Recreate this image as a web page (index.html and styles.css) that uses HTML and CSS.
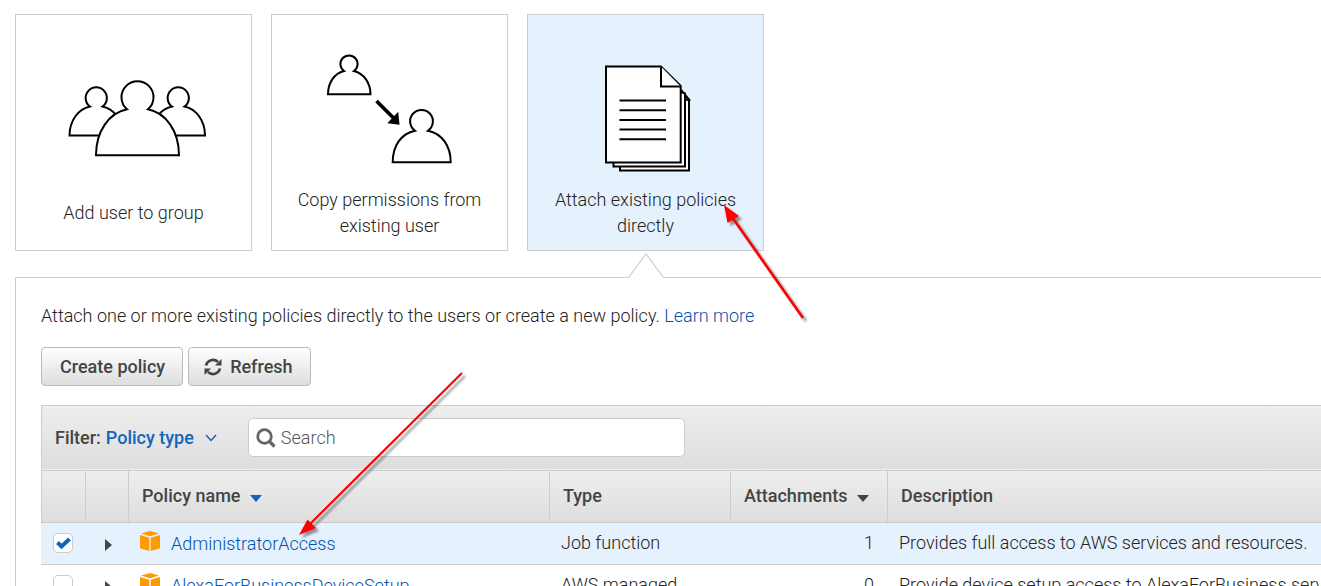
FILE: index.html
```html
<!DOCTYPE html>
<html lang="en">
<head>
<meta charset="utf-8">
<title>Set permissions</title>
<link rel="stylesheet" href="styles.css">
</head>
<body>
<main class="page">
  <div class="options">
    <button type="button" class="option">
      <svg class="option-icon" viewBox="16 15 235 172" aria-hidden="true">
        <g class="outline">
          <path d="M69.5 135.5C69.5 121 78 109 90 106.500A10.600 10.600 0 1 1 102.500 106.500C114.500 109 123 121 123 135.500Z"/>
          <path d="M151.500 135.500C151.500 121 160 109 172 106.500A10.600 10.600 0 1 1 184.500 106.500C196.500 109 205 121 205 135.500Z"/>
          <path d="M96 155.200C96 131 109 113 127 109.300A16 16 0 1 1 148 109.300C166 113 179 131 179 155.200Z"/>
        </g>
      </svg>
      <span class="option-label">Add user to group</span>
    </button>
    <button type="button" class="option">
      <svg class="option-icon" viewBox="272 15 235 172" aria-hidden="true">
        <g class="outline">
          <path d="M328 94.300C328 83 334 73.500 344 71A8.600 8.600 0 1 1 354 71C364 73.500 370.500 83 370.500 94.300Z"/>
          <path d="M392.700 162.300C392.700 146 401 133.500 415 130.700A11.400 11.400 0 1 1 428 130.700C442 133.500 450.700 146 450.700 162.300Z"/>
        </g>
        <path d="M376.500 101L394 118.500" stroke="#000" stroke-width="3.800"/>
        <path d="M399.500 124.700L387.300 123.300L398.200 111.700Z"/>
      </svg>
      <span class="option-label">Copy permissions from existing user</span>
    </button>
    <button type="button" class="option option-selected">
      <svg class="option-icon" viewBox="528 15 235 172" aria-hidden="true">
        <g class="outline">
          <path d="M620 99H683L689 100V170.500H620Z"/>
          <path d="M681 90L689 99.500H685"/>
          <path d="M613.500 92H681L685 93.500V166.500H613.500Z"/>
          <path d="M606 66.500H661L680.700 86V162.500H606Z"/>
          <path d="M661 66.500V86.500H680.700"/>
          <path d="M619.500 100.500H666M619.500 110.300H666M619.500 120H666M619.500 129.600H666M619.500 139.300H666"/>
        </g>
      </svg>
      <span class="option-label">Attach existing policies directly</span>
    </button>
  </div>

  <section class="panel">
    <svg class="panel-caret" viewBox="0 0 38 26" aria-hidden="true">
      <path d="M1 25L19 1L37 25V26H1Z" fill="#fff"/>
      <path d="M0 24.500H1.500L19 1L36.500 24.500H38" fill="none" stroke="#ccc" stroke-width="1.200"/>
    </svg>
    <p class="intro">Attach one or more existing policies directly to the users or create a new policy. <a href="#">Learn more</a></p>
    <div class="actions">
      <button type="button" class="btn">Create policy</button>
      <button type="button" class="btn"><svg class="btn-icon" viewBox="0 0 18 18" aria-hidden="true">
        <path d="M2 7.500A7.200 7.200 0 0 1 14 4M16 10.500A7.200 7.200 0 0 1 4 14" fill="none" stroke="#444" stroke-width="2.600"/>
        <path d="M17.500 1V7.500H11ZM.5 17V10.500H7Z" fill="#444"/>
      </svg>Refresh</button>
    </div>

    <div class="filter">
      <span class="filter-name">Filter:</span>
      <button type="button" class="filter-type">Policy type
        <svg class="chevron" viewBox="0 0 12 8" aria-hidden="true"><path d="M1 1L6 6.500L11 1" fill="none" stroke="#16b" stroke-width="1.500"/></svg>
      </button>
      <label class="search">
        <svg class="search-icon" viewBox="0 0 20 20" aria-hidden="true"><circle cx="8.500" cy="8.500" r="6.800" fill="none" stroke="#666" stroke-width="2.800"/><path d="M13.500 13.500L18.500 18.500" stroke="#666" stroke-width="3.200"/></svg>
        <input class="search-input" type="text" placeholder="Search" aria-label="Search">
      </label>
    </div>

    <table class="policies">
      <colgroup><col class="col-check"><col class="col-expand"><col class="col-name"><col class="col-type"><col class="col-count"><col></colgroup>
      <thead>
        <tr>
          <th></th>
          <th></th>
          <th>Policy name <svg class="sort" viewBox="0 0 12 7" aria-hidden="true"><path d="M0 0H12L6 7Z" fill="#16b"/></svg></th>
          <th>Type</th>
          <th>Attachments <svg class="sort" viewBox="0 0 12 7" aria-hidden="true"><path d="M0 0H12L6 7Z" fill="#444"/></svg></th>
          <th>Description</th>
        </tr>
      </thead>
      <tbody>
        <tr class="row-selected">
          <td class="cell-check"><input class="check" type="checkbox" aria-label="Select AdministratorAccess" checked></td>
          <td class="cell-expand"><button type="button" class="expand" aria-label="Expand AdministratorAccess"><svg viewBox="0 0 7 12" aria-hidden="true"><path d="M0 0L7 6L0 12Z"/></svg></button></td>
          <td class="cell-name"><a class="policy" href="#"><svg class="cube" viewBox="0 0 20 20" aria-hidden="true"><path d="M10 0L19 2.500L10 5.200L1 2.500ZM0 4L9.300 6.800V20L0 17.200ZM20 4L10.700 6.800V20L20 17.200Z"/></svg>AdministratorAccess</a></td>
          <td>Job function</td>
          <td class="cell-count">1</td>
          <td>Provides full access to AWS services and resources.</td>
        </tr>
        <tr>
          <td class="cell-check"><input class="check" type="checkbox" aria-label="Select AlexaForBusinessDeviceSetup"></td>
          <td class="cell-expand"><button type="button" class="expand" aria-label="Expand AlexaForBusinessDeviceSetup"><svg viewBox="0 0 7 12" aria-hidden="true"><path d="M0 0L7 6L0 12Z"/></svg></button></td>
          <td class="cell-name"><a class="policy" href="#"><svg class="cube" viewBox="0 0 20 20" aria-hidden="true"><path d="M10 0L19 2.500L10 5.200L1 2.500ZM0 4L9.300 6.800V20L0 17.200ZM20 4L10.700 6.800V20L20 17.200Z"/></svg>AlexaForBusinessDeviceSetup</a></td>
          <td>AWS managed</td>
          <td class="cell-count">0</td>
          <td>Provide device setup access to AlexaForBusiness services</td>
        </tr>
      </tbody>
    </table>
  </section>

  <svg class="annotations" width="820" height="560" viewBox="0 0 820 560" aria-hidden="true">
    <g class="arrow">
      <path d="M803 318L732 217" stroke="#f00" stroke-width="2.600"/>
      <path d="M724 205L739 216L727.500 223Z"/>
    </g>
    <g class="arrow">
      <path d="M462 373L309 525" stroke="#f00" stroke-width="2.200"/>
      <path d="M299 535L307.500 519.500L316 528Z"/>
    </g>
  </svg>
</main>
</body>
</html>
```
FILE: styles.css
```css
* { box-sizing: border-box; }

body {
  margin: 0;
  height: 100vh;
  overflow: hidden;
  background: #fff;
  color: #222;
  font: 300 18px/26px Roboto, sans-serif;
}

button, input { font: inherit; color: inherit; }
a { color: #0353ae; text-decoration: none; }

.page { position: relative; padding: 14px 0 0 15px; }

.options { display: flex; gap: 19px; }

.option {
  display: flex;
  flex-direction: column;
  align-items: center;
  width: 237px;
  height: 237px;
  padding: 0;
  border: 1px solid #ccc;
  background: #fff;
}
.option-selected { background: #e5f1fd; }
.option-icon { width: 235px; height: 172px; }
.option-label {
  display: flex;
  align-items: center;
  width: 200px;
  height: 52px;
  justify-content: center;
}
.outline { fill: #fff; stroke: #000; stroke-width: 2; }

.panel {
  position: relative;
  margin-top: 26px;
  padding: 25px 0 0 25px;
  border: solid #ccc;
  border-width: 1px 0 0 1px;
}
.panel-caret {
  position: absolute;
  left: 611px;
  top: -25px;
  width: 38px;
  height: 26px;
}

.intro { margin: 0 0 18px; }

.actions { display: flex; gap: 5px; margin-bottom: 19px; }
.btn {
  display: flex;
  align-items: center;
  gap: 8px;
  height: 39px;
  padding: 0 17px 0 18px;
  border: 1px solid #bbb;
  border-radius: 4px;
  background: linear-gradient(#fff, #ddd);
  color: #444;
  font-weight: 500;
}
.btn-icon { width: 18px; height: 18px; }
.btn:last-child { padding: 0 17px 0 15px; }

.filter {
  display: flex;
  align-items: center;
  height: 65px;
  padding: 0 0 1px 13px;
  border: solid #ccc;
  border-width: 1px 0 0 1px;
  background: linear-gradient(#eee, #ddd);
  box-shadow: inset 0 -1px #eee;
}
.filter-name { margin-right: 5px; color: #444; font-weight: 500; }
.filter-type {
  display: flex;
  align-items: center;
  gap: 11px;
  padding: 0;
  border: 0;
  background: none;
  color: #16b;
  font-weight: 500;
}
.chevron { width: 12px; height: 8px; }
.search {
  display: flex;
  align-items: center;
  gap: 5px;
  width: 437px;
  height: 39px;
  margin-left: 31px;
  padding: 0 7px;
  border: 1px solid #ccc;
  border-radius: 5px;
  background: #fff;
}
.search-icon { width: 20px; height: 20px; }
.search-input { flex: 1; min-width: 0; padding: 0; border: 0; outline: 0; background: none; }
.search-input::placeholder { color: #555; opacity: 1; }

.policies {
  width: 100%;
  table-layout: fixed;
  border-spacing: 0;
}
.col-check { width: 44px; }
.col-expand { width: 43px; }
.col-name { width: 421px; }
.col-type { width: 181px; }
.col-count { width: 157px; }

.policies th {
  height: 53px;
  padding: 0 0 2px 13px;
  border: solid #ccc;
  border-width: 1px 0 1px 1px;
  background: linear-gradient(#eee, #ddd);
  color: #444;
  font-weight: 500;
  text-align: left;
}
.sort { width: 12px; height: 7px; margin-left: 5px; }

.policies td {
  height: 42px;
  padding: 0 13px 2px 12px;
  border-bottom: 1px solid #ccc;
  white-space: nowrap;
  overflow: hidden;
}
.row-selected td { background: #e5f1fd; }
.policies .cell-count { text-align: right; }
.policies .cell-check { padding: 0 0 2px 12px; }
.policies .cell-expand { padding: 2px 0 0 20px; }
.policies .cell-name { padding-bottom: 0; }

.check {
  display: block;
  appearance: none;
  width: 20px;
  height: 20px;
  margin: 0;
  border: 1px solid #ccc;
  border-radius: 5px;
  background: #fff;
}
.check:checked {
  background: #fff url("data:image/svg+xml,%3Csvg xmlns='http://www.w3.org/2000/svg' viewBox='0 0 18 18'%3E%3Cpath d='M3.500 8.500L7.500 12.500L15.500 5' fill='none' stroke='%231166bb' stroke-width='4'/%3E%3C/svg%3E") center / 18px 18px no-repeat;
}
.expand { display: block; padding: 0; border: 0; background: none; }
.expand svg { display: block; width: 7px; height: 12px; fill: #444; }

.policy { display: flex; align-items: center; gap: 11px; }
.cube { width: 20px; height: 20px; margin-bottom: 6px; fill: #f90; }

.annotations { position: absolute; left: 0; top: 0; pointer-events: none; }
.arrow { fill: #f00; filter: drop-shadow(3px 3px 1px #0006); }
```
